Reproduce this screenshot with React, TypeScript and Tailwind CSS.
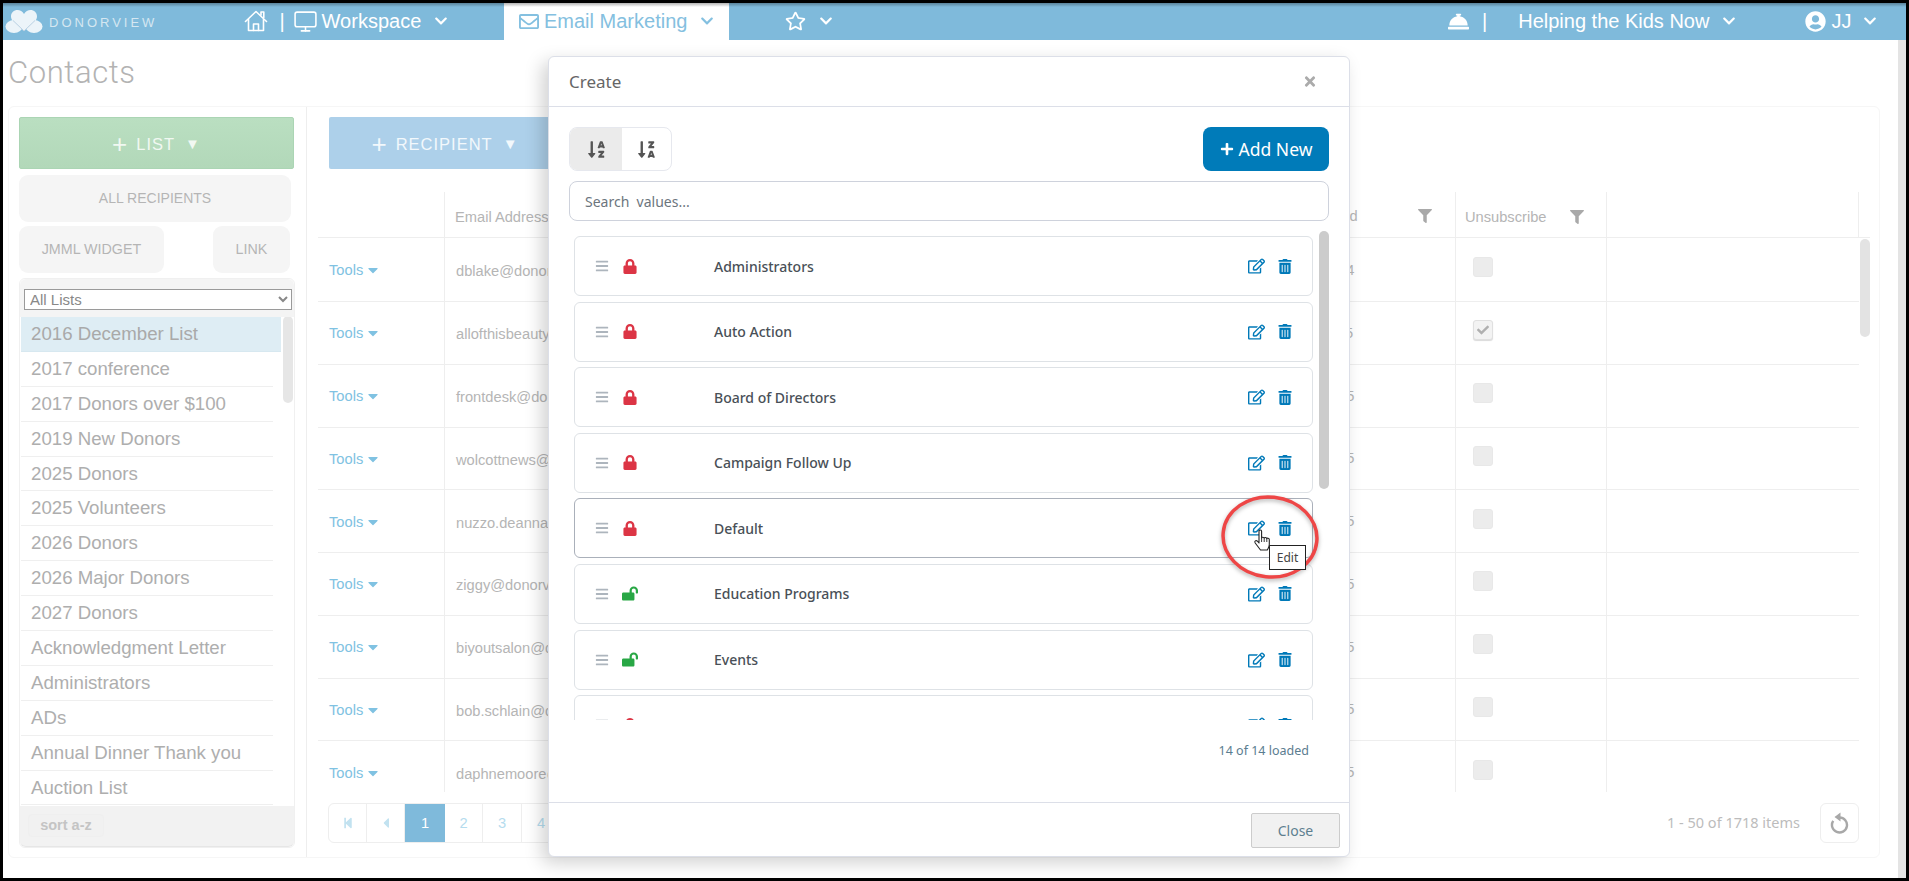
import React from "react";
import { FaChevronDown, FaRegStar, FaRegEnvelope, FaRegEdit, FaTrashAlt, FaLock, FaLockOpen, FaSortAlphaDown, FaSortAlphaDownAlt, FaBars, FaFilter, FaTimes, FaPlus, FaUserCircle, FaConciergeBell, FaCaretDown, FaStepBackward, FaCaretLeft, FaCheck } from "react-icons/fa";
import { LuMonitor } from "react-icons/lu";

const lists = ["2016 December List","2017 conference","2017 Donors over $100","2019 New Donors","2025 Donors","2025 Volunteers","2026 Donors","2026 Major Donors","2027 Donors","Acknowledgment Letter","Administrators","ADs","Annual Dinner Thank you","Auction List"];
const rows = [
  ["dblake@donorview.com","01/14/2024"],
  ["allofthisbeauty@donorview.com","02/11/2025"],
  ["frontdesk@donorview.com","03/02/2025"],
  ["wolcottnews@donorview.com","03/02/2025"],
  ["nuzzo.deanna@donorview.com","03/09/2025"],
  ["ziggy@donorview.com","04/12/2025"],
  ["biyoutsalon@donorview.com","04/18/2025"],
  ["bob.schlain@donorview.com","05/06/2025"],
  ["daphnemoore@donorview.com","05/21/2025"],
];
const items: [string, boolean][] = [["Administrators",true],["Auto Action",true],["Board of Directors",true],["Campaign Follow Up",true],["Default",true],["Education Programs",false],["Events",false],["Fundraising",true]];

function Logo() {
  return (
    <svg width="38" height="25" viewBox="0 0 38 25" className="opacity-85">
      <ellipse cx="9" cy="17.500" rx="8.500" ry="6.500" fill="#fff" />
      <ellipse cx="29" cy="17.500" rx="8.500" ry="6.500" fill="#fff" />
      <path d="M19 22C10 15 6 11.500 6 7.500 6 3.500 9 1 12.500 1 15 1 17.500 2.500 19 5 20.500 2.500 23 1 25.500 1 29 1 32 3.500 32 7.500 32 11.500 28 15 19 22z" fill="#fff" />
      <path d="M8 11.500L19 22 30 11.500" fill="none" stroke="#c5d5e4" strokeWidth="1" />
    </svg>
  );
}

function Home() {
  return (
    <svg width="24" height="24" viewBox="0 0 24 24" fill="none" stroke="#fff" strokeWidth="1.600" strokeLinejoin="round" strokeLinecap="round">
      <path d="M1.500 12.500L12 2.500l10.500 10" />
      <path d="M4.500 10.500V21.500h15V10.500" />
      <path d="M9.500 21.500V15h5v6.500" />
      <path d="M17 6V3h2.800v5.500" />
    </svg>
  );
}

function Reload() {
  return (
    <svg width="20" height="24" viewBox="0 0 20 24" fill="none">
      <path d="M9.500 6.500a7.500 7.500 0 1 1-6.300 3.400" stroke="#a8a8a8" strokeWidth="2.400" />
      <path d="M10.500 1.500v9L4.500 6z" fill="#a8a8a8" />
    </svg>
  );
}

function Hand() {
  return (
    <svg width="20" height="24" viewBox="0 0 20 24">
      <path d="M6 2.200c0-1.600 2.600-1.600 2.600 0V9c0-.9 2.400-1.200 2.600.3 0-1 2.400-1.200 2.600.4.100-.8 2.400-.8 2.500.8v5c0 2.500-1 3.500-2 5.500H7.500C6 19 4.500 17 2.200 14 1 12.300 3 10.800 4.400 12.200L6 14z" fill="#fff" stroke="#222" strokeWidth="1.100" strokeLinejoin="round" />
      <path d="M8.600 9v4M11.200 9.300v3.700M13.800 9.700v3.300" stroke="#222" strokeWidth="0.900" fill="none" />
    </svg>
  );
}

export default function App() {
  return (
    <div className="h-[881px] w-[1909px] overflow-hidden bg-black pt-[3px] pb-[3px] pl-[3px] pr-[3px] font-['Liberation_Sans',Arial,sans-serif]">
      <div className="relative flex h-[875px] w-[1903px] flex-col bg-white">
        <div className="absolute left-0 right-0 top-0 z-10 h-[4px] bg-gradient-to-b from-black/30 to-transparent" />

        {/* nav */}
        <nav className="flex h-[37px] shrink-0 bg-[#7fbadb] text-white">
          <div className="flex w-[501px] shrink-0 items-center pb-[1px]">
            <div className="ml-[2px] mt-[1px]"><Logo /></div>
            <span className="ml-[6px] mt-[3px] text-[13px] tracking-[3px] text-[#d5e7f1]">DONORVIEW</span>
            <span className="ml-[87px]"><Home /></span>
            <span className="ml-[11px] text-[20px]">|</span>
            <LuMonitor className="ml-[8px] h-[25px] w-[25px]" strokeWidth={1.5} />
            <span className="ml-[4px] text-[20px]">Workspace</span>
            <FaChevronDown className="ml-[12px] h-[14px] w-[16px]" />
          </div>
          <div className="flex w-[225px] shrink-0 items-center bg-white pb-[1px] text-[#84c0e0]">
            <FaRegEnvelope className="ml-[15px] h-[21px] w-[20px]" />
            <span className="ml-[5px] text-[20px]">Email Marketing</span>
            <FaChevronDown className="ml-[12px] h-[14px] w-[16px]" />
          </div>
          <div className="flex flex-1 items-center pb-[1px]">
            <FaRegStar className="ml-[56px] h-[22px] w-[21px]" />
            <FaChevronDown className="ml-[12px] h-[14px] w-[16px]" />
            <FaConciergeBell className="ml-[614px] h-[21px] w-[21px]" />
            <span className="ml-[13px] text-[20px]">|</span>
            <span className="ml-[31px] text-[20px]">Helping the Kids Now</span>
            <FaChevronDown className="ml-[12px] h-[14px] w-[16px]" />
            <FaUserCircle className="ml-[68px] h-[21px] w-[21px]" />
            <span className="ml-[5px] text-[20px]">JJ</span>
            <FaChevronDown className="ml-[11px] h-[14px] w-[16px]" />
          </div>
        </nav>

        <div className="flex flex-1">
          <main className="w-[1895px] shrink-0 pl-[5px]">
            <h1 className="mt-[14px] h-[52px] text-[31px] font-light leading-[38px] tracking-[0.6px] text-[#b3b3b3] font-['Roboto',sans-serif]">Contacts</h1>

            {/* card */}
            <div className="flex h-[752px] w-[1872px] rounded-[6px] border border-[#f6f6f6]">
              {/* left */}
              <aside className="h-full w-[298px] shrink-0 border-r border-[#eeeeee] pl-[10px] pt-[10px]">
                <div className="flex h-[52px] w-[275px] items-center justify-center gap-[8px] rounded-[2px] border border-[#abd5b4] bg-gradient-to-b from-[#badfc1] to-[#b2d8b9] pt-[2px] text-[16.5px] tracking-[1px] text-[#f1f8f2]">
                  <span className="text-[26px] leading-none">+</span><span>LIST</span><span className="ml-[2px] text-[15px]">▼</span>
                </div>
                <div className="mt-[6px] flex h-[47px] w-[272px] items-center justify-center rounded-[9px] bg-[#f5f5f5] text-[14px] text-[#b5b5b5]">ALL RECIPIENTS</div>
                <div className="mt-[4px] flex w-[271px] justify-between">
                  <div className="flex h-[47px] w-[145px] items-center justify-center rounded-[9px] bg-[#f5f5f5] text-[14.3px] text-[#b5b5b5]">JMML WIDGET</div>
                  <div className="flex h-[47px] w-[77px] items-center justify-center rounded-[9px] bg-[#f5f5f5] text-[14.3px] text-[#b5b5b5]">LINK</div>
                </div>
                <div className="mt-[5px] w-[276px] rounded-[6px] border border-[#f0f0f0] bg-white">
                  <div className="flex h-[38px] items-start rounded-t-[6px] bg-[#f4f4f4] pl-[4px] pt-[10px]">
                    <select defaultValue="All Lists" className="h-[21px] w-[268px] appearance-auto rounded-none border border-[#9a9a9a] bg-white pl-[1px] text-[15px] leading-[18px] text-[#888888]">
                      <option>All Lists</option>
                    </select>
                  </div>
                  <div className="flex h-[489px] overflow-hidden pl-[1px]">
                    <div className="w-[260px] shrink-0">
                      {lists.map((l, i) => (
                        <div key={l} className={`flex h-[34.9px] items-center border-b text-[18.67px] ${i === 0 ? "w-[260px] border-[#d7e8f0] bg-[#deedf4] text-[#a9a9a9]" : "w-[252px] border-[#efefef] text-[#aeaeae]"} pl-[10px]`}>{l}</div>
                      ))}
                    </div>
                    <div className="ml-[2px] mt-[-1px] h-[87px] w-[10px] rounded-[5px] bg-[#e6e6e6]" />
                  </div>
                  <div className="h-[41px] rounded-b-[6px] border-b border-[#e6e6e6] bg-[#f2f2f2] pl-[8px] pt-[8px]">
                    <div className="flex h-[23px] w-[76px] items-center justify-center rounded-[4px] border border-[#efefef] bg-[#f1f1f1] text-[14.5px] font-bold text-[#c4c4c4]">sort a-z</div>
                  </div>
                </div>
              </aside>

              {/* right */}
              <section className="flex-1 pl-[10px] pt-[10px]">
                <div className="ml-[12px] flex h-[52px] w-[229px] items-center justify-center gap-[8px] rounded-[2px] bg-[#add0ea] pt-[2px] pl-[3px] text-[16.5px] tracking-[1px] text-[#f2f8fc]">
                  <span className="text-[26px] leading-none">+</span><span>RECIPIENT</span><span className="ml-[2px] text-[15px]">▼</span>
                </div>
                {/* table head */}
                <div className="ml-[1px] mt-[23px] flex h-[46px] w-[1552px] border-b border-[#eeeeee] text-[14.67px] text-[#b5b5b5]">
                  <div className="w-[126px] shrink-0" />
                  <div className="flex w-[816px] shrink-0 items-center border-l border-[#eeeeee] pl-[10px] pt-[4px]">Email Address</div>
                  <div className="flex w-[195px] shrink-0 items-center justify-between pl-[21px] pr-[23px] pt-[2px]">
                    <span>Date Added</span><FaFilter className="h-[14px] w-[14px] text-[#a9a9a9]" />
                  </div>
                  <div className="flex w-[151px] shrink-0 items-center justify-between border-l border-[#eeeeee] pl-[9px] pr-[22px] pt-[4px]">
                    <span>Unsubscribe</span><FaFilter className="h-[14px] w-[14px] text-[#a9a9a9]" />
                  </div>
                  <div className="w-[253px] shrink-0 border-l border-r border-[#eeeeee]" />
                </div>
                {/* table rows */}
                <div className="relative ml-[1px] h-[554px] w-[1552px] overflow-hidden text-[14.67px] text-[#b5b5b5]">
                  {rows.map(([email, date], i) => (
                    <div key={email} className={`flex w-[1541px] border-b border-[#eeeeee] ${i === 0 ? "h-[64px]" : "h-[62.75px]"}`}>
                      <div className="flex w-[126px] shrink-0 items-center gap-[3px] pl-[11px] pt-[1px] text-[#80c2e2]">Tools<FaCaretDown className="h-[16px] w-[14px]" /></div>
                      <div className="flex w-[816px] shrink-0 items-center border-l border-[#eeeeee] pl-[11px] pt-[3px]">{email}</div>
                      <div className="flex w-[195px] shrink-0 items-center pl-[21px]">{date}</div>
                      <div className="flex w-[151px] shrink-0 items-center border-l border-[#eeeeee] pb-[5px] pl-[17px]">
                        <div className={`flex h-[20px] w-[20px] items-center justify-center rounded-[3px] border ${i === 1 ? "border-[#e0e0e0] bg-[#f3f3f3] shadow-[0_1px_1px_rgba(0,0,0,0.15)]" : "border-[#e8e8e8] bg-[#ececec]"}`}>
                          {i === 1 && <FaCheck className="h-[12px] w-[12px] text-[#b0b0b0]" />}
                        </div>
                      </div>
                      <div className="flex-1 border-l border-[#eeeeee]" />
                    </div>
                  ))}
                  <div className="absolute right-0 top-[1px] h-[98px] w-[10px] rounded-[5px] bg-[#e3e3e3]" />
                </div>
                {/* pagination */}
                <div className="ml-[11px] mt-[11px] flex w-[1531px] items-center justify-between">
                  <div className="flex h-[40px] overflow-hidden rounded-[6px] border border-[#eeeeee] text-[14.67px] text-[#b5dcee]">
                    <div className="flex w-[38px] items-center justify-center border-r border-[#eeeeee]"><FaStepBackward className="h-[12px] w-[12px] text-[#c2e2f0]" /></div>
                    <div className="flex w-[38px] items-center justify-center border-r border-[#eeeeee]"><FaCaretLeft className="h-[16px] w-[14px] text-[#c2e2f0]" /></div>
                    <div className="flex w-[40px] items-center justify-center bg-[#7fbadb] text-white">1</div>
                    <div className="flex w-[38px] items-center justify-center border-r border-[#eeeeee]">2</div>
                    <div className="flex w-[39px] items-center justify-center border-r border-[#eeeeee]">3</div>
                    <div className="flex w-[39px] items-center justify-center border-r border-[#eeeeee]">4</div>
                    <div className="flex w-[39px] items-center justify-center">5</div>
                  </div>
                  <div className="flex items-center">
                    <span className="font-['Noto_Sans',sans-serif] text-[14.5px] text-[#bcbcbc]">1 - 50 of 1718 items</span>
                    <div className="ml-[20px] flex h-[40px] w-[39px] items-center justify-center rounded-[6px] border border-[#eeeeee]">
                      <Reload />
                    </div>
                  </div>
                </div>
              </section>
            </div>
          </main>
          <div className="ml-auto w-[8px] bg-[#e4e4e4]" />
        </div>

        {/* modal */}
        <div className="absolute left-[545px] top-[53px] z-20 flex h-[801px] w-[802px] flex-col rounded-[6px] border border-[#dcdfe8] bg-white shadow-[-6px_6px_18px_rgba(0,0,0,0.18)] font-['Noto_Sans',sans-serif]">
          <div className="flex h-[50px] shrink-0 items-center justify-between border-b border-[#dcdfe8] pl-[20px] pr-[32px]">
            <span className="text-[17px] text-[#666666]">Create</span>
            <FaTimes className="h-[15px] w-[14px] text-[#ababab]" />
          </div>
          <div className="flex h-[695px] flex-col pl-[20px] pr-[20px] pt-[20px]">
            <div className="flex items-start justify-between">
              <div className="flex h-[44px] w-[103px] overflow-hidden rounded-[8px] border border-[#e6e8ee]">
                <div className="flex w-[52px] items-center justify-center bg-[#ebebeb]"><FaSortAlphaDown className="h-[19px] w-[19px] text-[#555555]" /></div>
                <div className="flex flex-1 items-center justify-center"><FaSortAlphaDownAlt className="h-[19px] w-[19px] text-[#555555]" /></div>
              </div>
              <div className="flex h-[44px] w-[126px] items-center justify-center gap-[5px] rounded-[8px] bg-[#007bb9] text-[17.5px] text-white">
                <FaPlus className="h-[14px] w-[14px]" />Add New
              </div>
            </div>
            <div className="mt-[10px] flex h-[40px] items-center rounded-[8px] border border-[#ced2dc] pl-[15px] pt-[1px] text-[14px] text-[#6c757d]">Search&nbsp; values...</div>
            <div className="mt-[10px] flex h-[489px] overflow-hidden">
              <div className="ml-[5px] mt-[5px] w-[739px] shrink-0">
                {items.map(([name, locked], i) => (
                  <div key={name} className={`mb-[5.6px] flex h-[60px] items-center rounded-[6px] border pl-[20px] pr-[20px] ${i === 4 ? "border-[#aab0ba]" : "border-[#dee2e6]"}`}>
                    <FaBars className="h-[14px] w-[14px] text-[#adb5bd]" />
                    <span className="ml-[13px] flex w-[16px] justify-center">
                      {locked ? <FaLock className="h-[15px] w-[14px] text-[#dc3545]" /> : <FaLockOpen className="h-[15px] w-[17px] text-[#28a745]" />}
                    </span>
                    <span className="ml-[76px] flex-1 text-[14px] font-medium text-[#495057]">{name}</span>
                    <FaRegEdit className="h-[16px] w-[17px] text-[#0079b8]" />
                    <FaTrashAlt className="ml-[13px] h-[15px] w-[14px] text-[#0079b8]" />
                  </div>
                ))}
              </div>
              <div className="ml-[6px] h-[258px] w-[10px] rounded-[5px] bg-[#cccccc]" />
            </div>
            <div className="mt-[22px] pr-[20px] text-right text-[12.5px] text-[#5b7d90]">14 of 14 loaded</div>
          </div>
          <div className="flex flex-1 items-start justify-end border-t border-[#dcdfe8] pr-[9px] pt-[10px]">
            <div className="flex h-[35px] w-[89px] items-center justify-center rounded-[2px] border border-[#cccccc] bg-[#f1f1f1] text-[14px] text-[#5e7f90]">Close</div>
          </div>
        </div>

        {/* annotation */}
        <svg width="104" height="92" viewBox="0 0 104 92" className="absolute left-[1215px] top-[489px] z-30 drop-shadow-[0_2px_2px_rgba(0,0,0,0.3)]">
          <ellipse cx="52" cy="45" rx="47" ry="40" fill="none" stroke="#ee4646" strokeWidth="3.500" transform="rotate(6 52 45)" />
        </svg>
        <div className="absolute left-[1266px] top-[542px] z-30 flex h-[25px] w-[37px] items-center justify-center border border-[#222222] bg-white text-[12px] text-[#444444] font-['Noto_Sans',sans-serif]">Edit</div>
        <div className="absolute left-[1250px] top-[526px] z-40"><Hand /></div>
      </div>
    </div>
  );
}
